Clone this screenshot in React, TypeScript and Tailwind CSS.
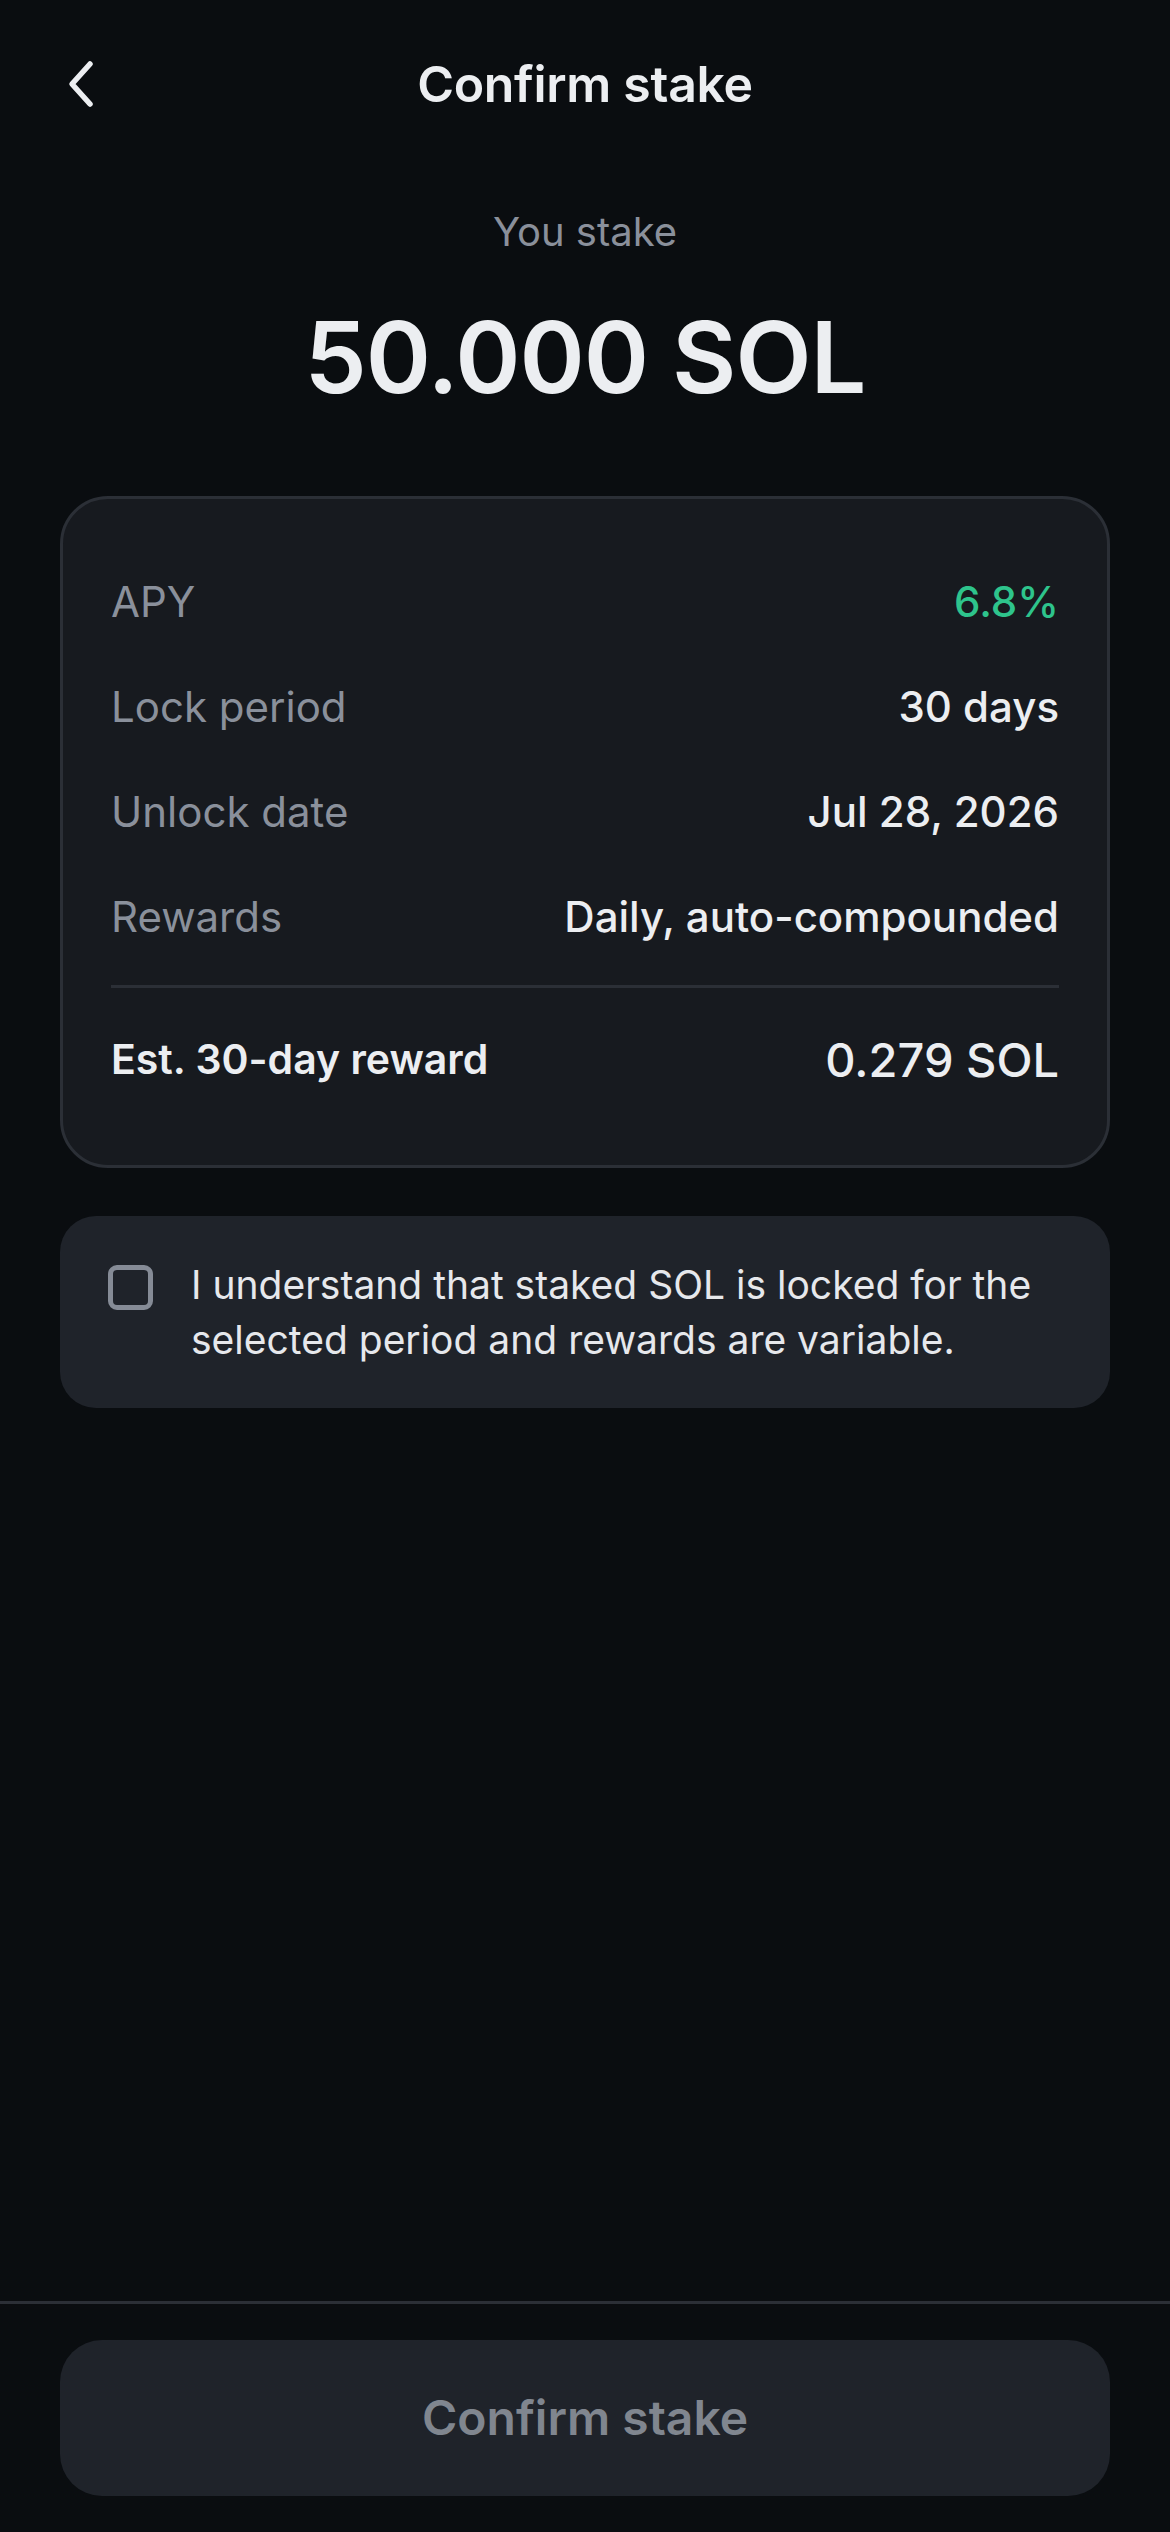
import { useState } from "react"

const rows = [
  { label: "APY", value: "6.8%", accent: true },
  { label: "Lock period", value: "30 days" },
  { label: "Unlock date", value: "Jul 28, 2026" },
  { label: "Rewards", value: "Daily, auto-compounded" },
]

function BackIcon() {
  return (
    <svg width="30" height="48" viewBox="0 0 30 48" fill="none">
      <path d="M24 4 L6 24 L24 44" stroke="#eceef1" strokeWidth="5.5" strokeLinecap="round" strokeLinejoin="round" />
    </svg>
  )
}

export default function App() {
  const [agreed, setAgreed] = useState(false)

  return (
    <div className="h-screen flex flex-col bg-[#0a0d10] text-[#eceef1] font-['Inter',sans-serif]">
      <header className="relative h-[168px] flex items-center justify-center shrink-0">
        <button className="absolute left-[66px] top-[60px] p-0">
          <BackIcon />
        </button>
        <h1 className="text-[50px] font-semibold tracking-[-0.3px]">Confirm stake</h1>
      </header>

      <main className="flex-1 flex flex-col px-15">
        <div className="flex flex-col items-center pt-[38px]">
          <span className="text-[40px] leading-[52px] text-[#8a909b]">You stake</span>
          <span className="mt-[44px] text-[99px] leading-[110px] font-semibold tracking-[-1px] text-[#eceef1]">50.000 SOL</span>
        </div>

        <section className="mt-[84px] rounded-[48px] border-[3px] border-[#2b2f36] bg-[#171a1f] px-12 py-[72px]">
          <div className="flex flex-col gap-[45px]">
            {rows.map((r) => (
              <div key={r.label} className="h-[60px] flex items-center justify-between text-[42px]">
                <span className="text-[#8a909b]">{r.label}</span>
                <span className={r.accent ? "font-medium text-[#2ec48c]" : "font-medium text-[#eceef1]"}>{r.value}</span>
              </div>
            ))}
          </div>
          <div className="my-[39px] h-[3px] bg-[#2b2f36]" />
          <div className="h-[66px] flex items-center justify-between">
            <span className="text-[41px] font-semibold">Est. 30-day reward</span>
            <span className="text-[47px] font-medium">0.279 SOL</span>
          </div>
        </section>

        <label className="mt-[48px] flex items-start gap-[38px] rounded-[36px] bg-[#1f232a] px-12 py-[41px] cursor-pointer">
          <input type="checkbox" className="sr-only" checked={agreed} onChange={(e) => setAgreed(e.target.checked)} />
          <span className="mt-[8px] w-[45px] h-[45px] shrink-0 rounded-[9px] border-[5px] border-[#858b96]" />
          <span className="text-[39px] leading-[55px] text-[#e6e8ec]">
            I understand that staked SOL is locked for the selected period and rewards are variable.
          </span>
        </label>
      </main>

      <footer className="shrink-0 border-t-[3px] border-[#2b2f36] px-15 pt-[36px] pb-[36px]">
        <button disabled className="w-full h-[156px] rounded-[42px] bg-[#1f232a] text-[48px] font-semibold text-[#80868f]">
          Confirm stake
        </button>
      </footer>
    </div>
  )
}
